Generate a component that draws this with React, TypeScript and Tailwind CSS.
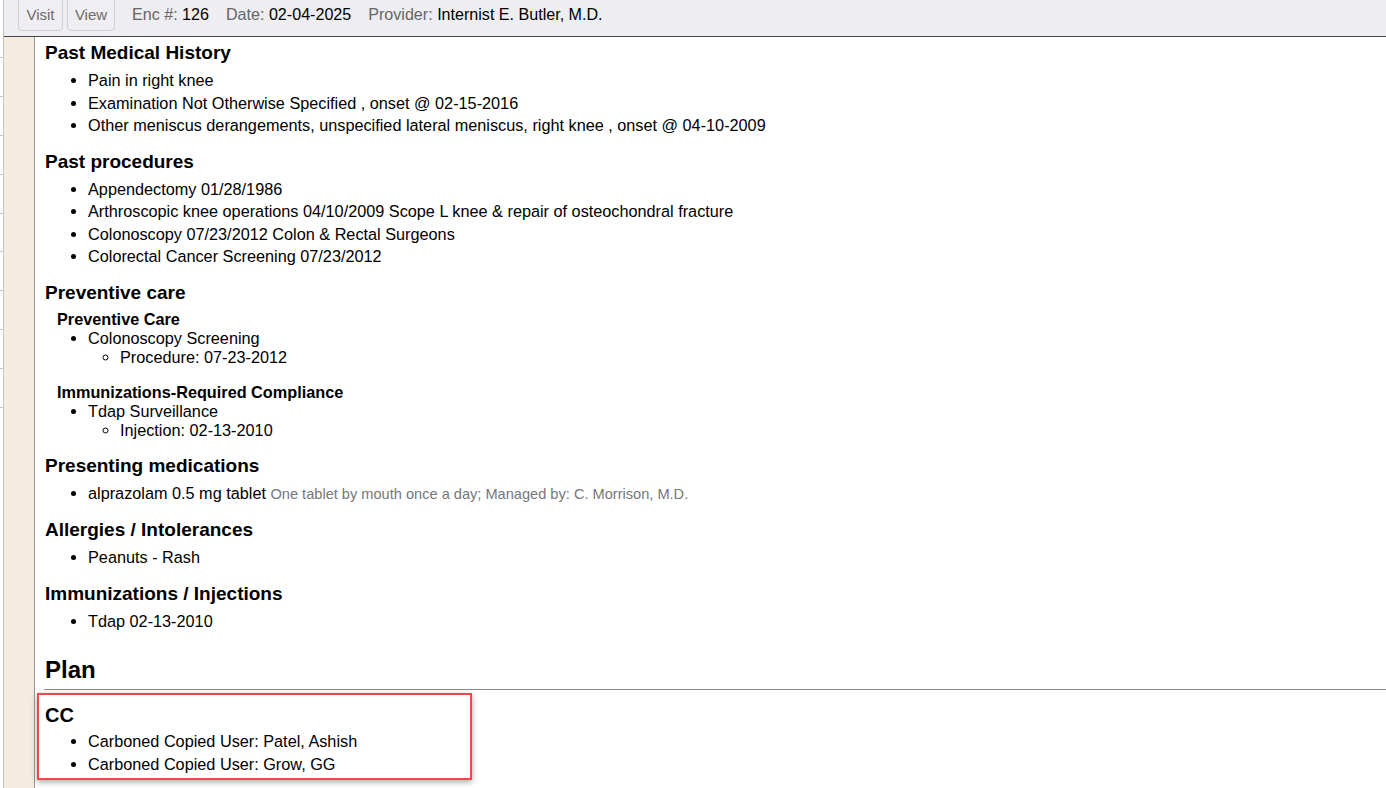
import React from "react";

const font = { fontFamily: '"Liberation Sans", Arial, sans-serif' };

function Section({ title, items }: { title: string; items: React.ReactNode[] }) {
  return (
    <div className="mb-[13px]">
      <h3 className="text-[19px] font-bold leading-[24px] text-black mb-[4px]">{title}</h3>
      <ul className="list-disc pl-[43px] text-[16.25px] leading-[22.5px] text-black">
        {items.map((it, i) => (
          <li key={i}>{it}</li>
        ))}
      </ul>
    </div>
  );
}

export default function App() {
  const ticks = [57, 96, 135, 174, 213, 251, 290, 329, 368, 407];
  return (
    <div className="relative w-[1386px] h-[788px] overflow-hidden bg-white flex" style={font}>
      {/* far left strip */}
      <div className="relative w-[4px] h-full bg-white border-r border-[#c4c4c4] shrink-0">
        {ticks.map((t) => (
          <div key={t} className="absolute left-0 w-[3px] h-px bg-[#c4c4c4]" style={{ top: t }} />
        ))}
      </div>
      <div className="flex-1 flex flex-col min-w-0">
        {/* header */}
        <div className="h-[37px] shrink-0 bg-[#eeedf2] border-b border-[#454545] flex items-start">
          <div className="flex gap-[4px] pl-[14px]">
            <div className="h-[32px] mt-[-1px] w-[45px] border border-[#cfcfd4] rounded-b-[4px] bg-[#efeef3] flex items-center justify-center text-[15px] text-[#6b6b6b]">
              Visit
            </div>
            <div className="h-[32px] mt-[-1px] w-[48px] border border-[#cfcfd4] rounded-b-[4px] bg-[#efeef3] flex items-center justify-center text-[15px] text-[#6b6b6b]">
              View
            </div>
          </div>
          <div className="flex items-center h-[28px] text-[16.1px] ml-[17px] gap-[17px]">
            <span>
              <span className="text-[#666]">Enc #: </span>
              <span className="text-black">126</span>
            </span>
            <span>
              <span className="text-[#666]">Date: </span>
              <span className="text-black">02-04-2025</span>
            </span>
            <span>
              <span className="text-[#666]">Provider: </span>
              <span className="text-black">Internist E. Butler, M.D.</span>
            </span>
          </div>
        </div>
        <div className="flex flex-1 min-h-0">
          {/* beige sidebar */}
          <div className="w-[31px] shrink-0 bg-[#f4eddf] border-r border-[#9a9a9a]" />
          {/* content */}
          <div className="flex-1 pt-[4px] min-w-0">
            <div className="pl-[10px]">
              <Section
                title="Past Medical History"
                items={[
                  "Pain in right knee",
                  "Examination Not Otherwise Specified , onset @ 02-15-2016",
                  "Other meniscus derangements, unspecified lateral meniscus, right knee , onset @ 04-10-2009",
                ]}
              />
              <Section
                title="Past procedures"
                items={[
                  "Appendectomy 01/28/1986",
                  "Arthroscopic knee operations 04/10/2009 Scope L knee & repair of osteochondral fracture",
                  "Colonoscopy 07/23/2012 Colon & Rectal Surgeons",
                  "Colorectal Cancer Screening 07/23/2012",
                ]}
              />
              <div className="mb-[14px]">
                <h3 className="text-[19px] font-bold leading-[24px] text-black mb-[5px]">Preventive care</h3>
                <div className="pl-[12px] text-[16.25px] leading-[19px] font-bold">Preventive Care</div>
                <ul className="list-disc pl-[43px] text-[16.25px] leading-[19px]">
                  <li>
                    Colonoscopy Screening
                    <ul className="list-[circle] pl-[32px]">
                      <li>Procedure: 07-23-2012</li>
                    </ul>
                  </li>
                </ul>
                <div className="pl-[12px] text-[16.25px] leading-[19px] font-bold mt-[16px]">
                  Immunizations-Required Compliance
                </div>
                <ul className="list-disc pl-[43px] text-[16.25px] leading-[19px]">
                  <li>
                    Tdap Surveillance
                    <ul className="list-[circle] pl-[32px]">
                      <li>Injection: 02-13-2010</li>
                    </ul>
                  </li>
                </ul>
              </div>
              <Section
                title="Presenting medications"
                items={[
                  <span>
                    alprazolam 0.5 mg tablet{" "}
                    <span className="text-[14.6px] text-[#777]">
                      One tablet by mouth once a day; Managed by: C. Morrison, M.D.
                    </span>
                  </span>,
                ]}
              />
              <Section title="Allergies / Intolerances" items={["Peanuts - Rash"]} />
              <Section title="Immunizations / Injections" items={["Tdap 02-13-2010"]} />
              <h2 className="text-[24px] font-bold leading-[28px] mt-[24px] text-black">Plan</h2>
            </div>
            <div className="ml-[9px] h-px bg-[#8a8a8a] mt-[5px]" />
            <div className="ml-[2px] mt-[3px] w-[435px] border-2 border-[#ec4a4a] shadow-[0_2px_6px_rgba(0,0,0,0.35)] pl-[6px] pt-[8px] pb-[3px]">
              <h3 className="text-[20px] font-bold leading-[24px] text-black mb-[3px]">CC</h3>
              <ul className="list-disc pl-[43px] text-[16.25px] leading-[22.5px] text-black">
                <li>Carboned Copied User: Patel, Ashish</li>
                <li>Carboned Copied User: Grow, GG</li>
              </ul>
            </div>
          </div>
        </div>
      </div>
    </div>
  );
}
